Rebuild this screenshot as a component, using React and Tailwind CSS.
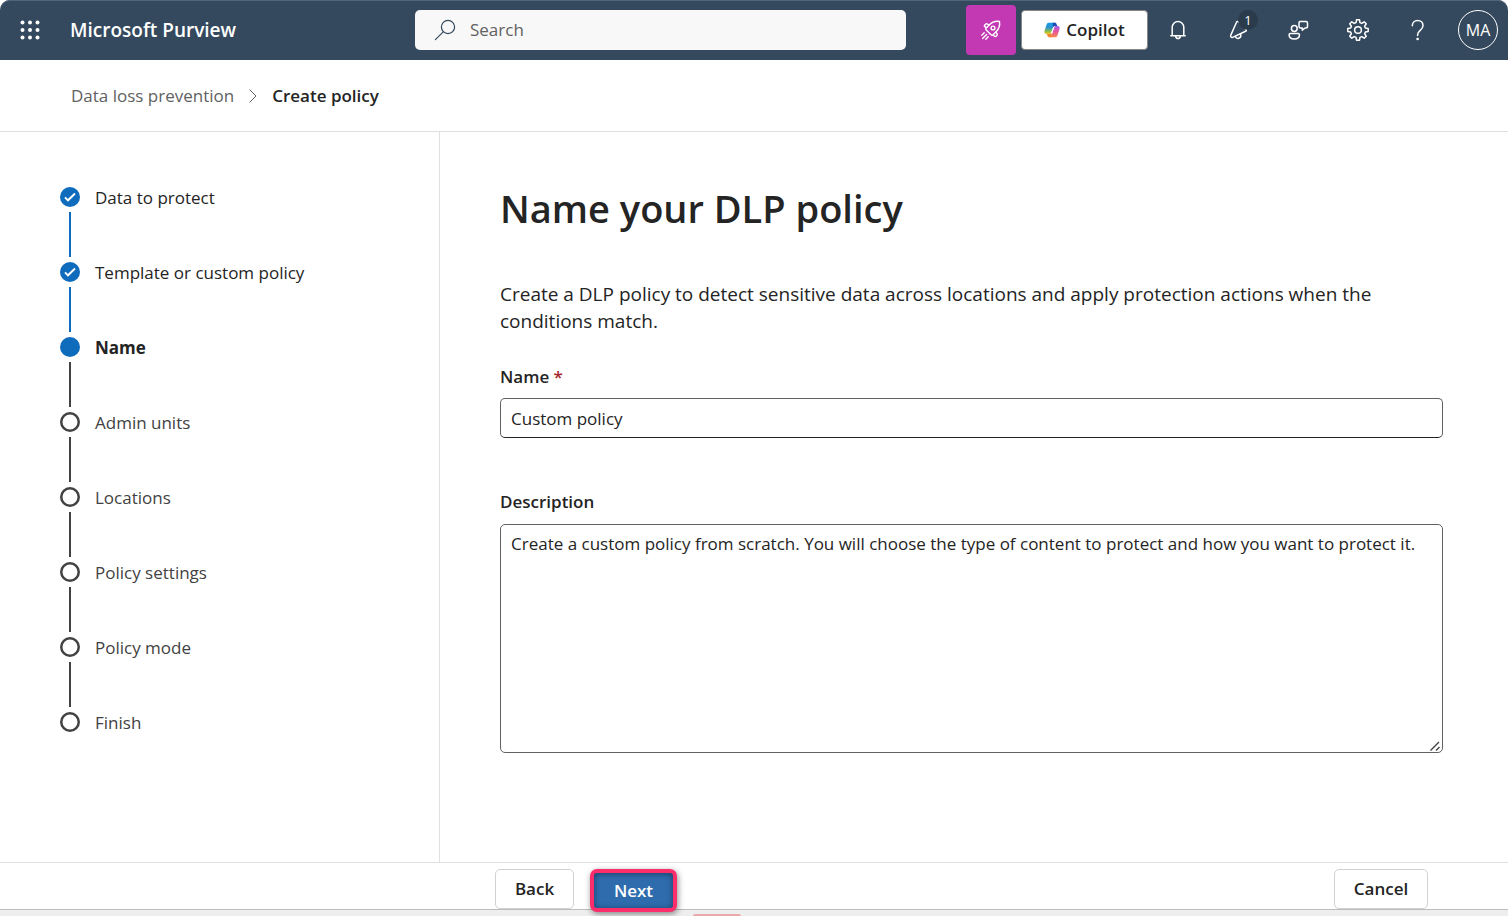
import { useState } from "react";

const steps = [
  { label: "Data to protect", state: "done" },
  { label: "Template or custom policy", state: "done" },
  { label: "Name", state: "current" },
  { label: "Admin units", state: "todo" },
  { label: "Locations", state: "todo" },
  { label: "Policy settings", state: "todo" },
  { label: "Policy mode", state: "todo" },
  { label: "Finish", state: "todo" },
];

const strokeProps = {
  viewBox: "0 0 24 24",
  fill: "none",
  stroke: "currentColor",
  strokeLinecap: "round",
  strokeLinejoin: "round",
  "aria-hidden": true,
};

function WaffleIcon() {
  return (
    <svg viewBox="0 0 20 20" className="size-5" fill="currentColor" aria-hidden="true">
      {[2.5, 10, 17.5].map((y) => [2.5, 10, 17.5].map((x) => <circle key={`${x}-${y}`} cx={x} cy={y} r="2" />))}
    </svg>
  );
}

function SearchIcon() {
  return (
    <svg {...strokeProps} className="size-6 shrink-0 text-[#33495d]" strokeWidth="1.2">
      <circle cx="15" cy="9" r="6.6" />
      <path d="M10.2 13.8 2.4 21.6" />
    </svg>
  );
}

function RocketIcon() {
  return (
    <svg {...strokeProps} className="size-6" strokeWidth="1.4">
      <path d="M20.5 3.5c.6 3.700-.6 7.500-3.400 10.300l-3 3a1.500 1.500 0 0 1-2.100 0l-4.800-4.800a1.500 1.500 0 0 1 0-2.100l3-3c2.800-2.800 6.600-4 10.300-3.400Z" />
      <circle cx="14" cy="10" r="1.900" />
      <path d="M10 7 8 5.800a1 1 0 0 0-1.200.2L5.600 7.200a1 1 0 0 0 .2 1.500l1.300.9M17 14l1.200 2a1 1 0 0 1-.2 1.200l-1.200 1.200a1 1 0 0 1-1.500-.2l-.9-1.300" />
      <path d="m5.200 14.800-2.400 2.400M7.600 16.400l-4 4M9.200 18.800l-2.400 2.400" />
    </svg>
  );
}

function BellIcon() {
  return (
    <svg {...strokeProps} className="size-6" strokeWidth="1.5">
      <path d="M6.200 17.500V9.300a5.800 5.800 0 0 1 11.600 0v8.200M4.800 17.800h14.400M9.500 18c.3 1.600 1.200 2.500 2.500 2.500s2.200-.9 2.500-2.500" />
    </svg>
  );
}

function MegaphoneIcon() {
  return (
    <svg {...strokeProps} className="size-6" strokeWidth="1.5">
      <path d="M10.500 4.200 4.700 17.400c-.5 1.300.7 2.500 2 2L19.600 13.300c.8-.4 1-1.200.4-1.900L12.300 3.800c-.6-.6-1.500-.4-1.800.4Z" />
      <path d="M9.400 18.400c.4 1.600 1.800 2.400 3.300 1.900 1.600-.5 2.500-2 2-3.900" />
    </svg>
  );
}

function FeedbackIcon() {
  return (
    <svg {...strokeProps} className="size-6" strokeWidth="1.5">
      <circle cx="8.300" cy="10.500" r="2.900" />
      <path d="M4.300 15.600h8a1.200 1.200 0 0 1 1.200 1.200c0 2.600-2.100 4.200-5.200 4.200s-5.200-1.600-5.200-4.200a1.200 1.200 0 0 1 1.200-1.200Z" />
      <path d="M14 3.500h6a1.500 1.500 0 0 1 1.500 1.500v3.500A1.500 1.500 0 0 1 20 10h-1l-2.700 2.200V10H14.500a1.500 1.500 0 0 1-1.500-1.500V5a1.500 1.500 0 0 1 1-1.500Z" />
    </svg>
  );
}

function GearIcon() {
  return (
    <svg {...strokeProps} className="size-[26px]" strokeWidth="1.4">
      <path d="M10.200 5.200 10.600 2.600h2.800l.4 2.600 1.700.7 2.200-1.500 1.900 1.900-1.500 2.200.7 1.700 2.600.4v2.800l-2.600.4-.7 1.700 1.500 2.200-1.900 1.900-2.200-1.500-1.700.7-.4 2.600h-2.800l-.4-2.600-1.700-.7-2.200 1.500-1.900-1.900 1.500-2.200-.7-1.700-2.600-.4v-2.800l2.600-.4.7-1.700-1.500-2.200 1.900-1.900 2.200 1.500Z" />
      <circle cx="12" cy="12" r="3.100" />
    </svg>
  );
}

function HelpIcon() {
  return (
    <svg {...strokeProps} className="size-6" strokeWidth="1.500">
      <path d="M6.300 7.800c0-3 2.200-5.300 5.300-5.300s5.400 2.100 5.400 5c0 2.300-1.200 3.500-2.800 4.900-1.700 1.500-2.600 2.400-2.600 4.400v.7" />
      <circle cx="11.600" cy="21" r=".6" fill="currentColor" />
    </svg>
  );
}

function CopilotIcon() {
  return (
    <svg viewBox="0 0 16 16" className="size-4" aria-hidden="true">
      <defs>
        <linearGradient id="cpLeft" x1="0" y1="0" x2="0" y2="1">
          <stop offset="0" stopColor="#159fe6" />
          <stop offset=".4" stopColor="#2b8fd6" />
          <stop offset=".7" stopColor="#74b95a" />
          <stop offset="1" stopColor="#f2c81e" />
        </linearGradient>
        <linearGradient id="cpRight" x1="0" y1="0" x2="0" y2="1">
          <stop offset="0" stopColor="#a15cec" />
          <stop offset=".5" stopColor="#e8559e" />
          <stop offset="1" stopColor="#f5894c" />
        </linearGradient>
      </defs>
      <path d="M7.500 15.200H5.300c-1.100 0-1.600-.6-1.900-1.600L2.800 11.500H8Z" fill="#f2852f" />
      <path d="M5 .8h6L7.300 10.300C6.900 11.400 6.300 12 5 12H2.200C.6 12 0 10.500.5 9l2-6.200C3 1.400 3.700.8 5 .8Z" fill="url(#cpLeft)" />
      <path d="M11 15.200H5.500c1.200 0 1.600-.6 2-1.700L10 5.700C10.400 4.600 11 4 12.200 4h1.600c1.600 0 2.200 1.500 1.700 3l-2 6.200c-.5 1.400-1.200 2-2.500 2Z" fill="url(#cpRight)" />
      <path d="M8.500.8h2.300c1.100 0 1.600.6 1.900 1.600l.6 1.700h-2.100c-1 0-1.600.3-2 1.200Z" fill="#1b4db5" />
      <path d="M9.300 5h1L8.200 11.300H6.900Z" fill="#fff" />
    </svg>
  );
}

function StepMark({ state }) {
  if (state === "done") {
    return (
      <svg viewBox="0 0 20 20" className="size-5 shrink-0" aria-hidden="true">
        <circle cx="10" cy="10" r="10" fill="#0f6cbd" />
        <path d="m5 10.300 3 3 7-6.800" fill="none" stroke="#fff" strokeWidth="1.900" />
      </svg>
    );
  }
  if (state === "current") return <span className="size-5 shrink-0 rounded-full bg-[#0f6cbd]" />;
  return (
    <svg viewBox="0 0 20 20" className="size-5 shrink-0" aria-hidden="true">
      <circle cx="10" cy="10" r="8.750" fill="none" stroke="#424242" strokeWidth="2.500" />
    </svg>
  );
}

function HeaderButton({ label, children }) {
  return (
    <button type="button" aria-label={label} className="relative flex h-[60px] w-[60px] shrink-0 items-center justify-center">
      {children}
    </button>
  );
}

export default function App() {
  const [name, setName] = useState("Custom policy");
  const [description, setDescription] = useState(
    "Create a custom policy from scratch. You will choose the type of content to protect and how you want to protect it."
  );

  return (
    <div className="flex min-h-screen flex-col bg-white font-['Open_Sans','Noto_Sans',sans-serif] text-[17px] leading-6 text-[#242424]">
      <header className="flex h-[60px] items-center rounded-t-[10px] bg-[#34495e] text-white shadow-[inset_0_1px_0_#50647a]">
        <div className="flex w-[415px] shrink-0 items-center">
          <button type="button" aria-label="App launcher" className="flex h-[60px] w-[59px] items-center justify-center">
            <WaffleIcon />
          </button>
          <a href="#home" className="ml-[11px] text-[19px] font-semibold">Microsoft Purview</a>
        </div>
        <label className="flex h-10 max-w-[491px] flex-1 items-center gap-[13px] rounded-[5px] bg-[#f8f8f8] pl-[18px]">
          <SearchIcon />
          <input type="search" aria-label="Search" placeholder="Search" className="min-w-0 flex-1 bg-transparent text-[#242424] outline-none placeholder:text-[#616161]" />
        </label>
        <div className="ml-auto flex items-center">
          <button type="button" aria-label="What's new" className="flex size-[50px] items-center justify-center rounded bg-[#c239b3]">
            <RocketIcon />
          </button>
          <button type="button" className="ml-[5px] flex h-10 w-[127px] items-center justify-center gap-[6px] rounded border border-[#8a8886] bg-white font-semibold text-[#242424]">
            <CopilotIcon />
            Copilot
          </button>
          <HeaderButton label="Notifications"><BellIcon /></HeaderButton>
          <HeaderButton label="Announcements">
            <MegaphoneIcon />
            <span className="absolute top-[10px] left-[30px] flex size-5 items-center justify-center rounded-full bg-[#2a3b4c] text-[13px] leading-none">1</span>
          </HeaderButton>
          <HeaderButton label="Feedback"><FeedbackIcon /></HeaderButton>
          <HeaderButton label="Settings"><GearIcon /></HeaderButton>
          <HeaderButton label="Help"><HelpIcon /></HeaderButton>
          <HeaderButton label="Account">
            <span className="flex size-10 items-center justify-center rounded-full border border-white text-[16px]">MA</span>
          </HeaderButton>
        </div>
      </header>

      <nav aria-label="Breadcrumb" className="flex h-[72px] items-center border-b border-[#e0e0e0] px-[71px] pt-px">
        <a href="#dlp" className="text-[#616161]">Data loss prevention</a>
        <svg viewBox="0 0 10 16" className="mx-[14px] h-4 w-[10px]" fill="none" stroke="#616161" aria-hidden="true">
          <path d="M1.500 1.500 8 8l-6.500 6.500" />
        </svg>
        <span aria-current="page" className="font-semibold">Create policy</span>
      </nav>

      <div className="flex flex-1">
        <aside className="w-[440px] shrink-0 border-r border-[#e0e0e0] pt-[55px] pl-[60px]">
          <ol>
            {steps.map((step, i) => (
              <li key={step.label} className="flex gap-[15px]" aria-current={step.state === "current" ? "step" : undefined}>
                <div className="flex flex-col items-center gap-[5px]">
                  <StepMark state={step.state} />
                  {i < steps.length - 1 && (
                    <span className={`mb-[5px] h-[45px] w-[2px] ${step.state === "done" ? "bg-[#0f6cbd]" : "bg-[#424242]"}`} />
                  )}
                </div>
                <span className={`leading-[21px] ${step.state === "current" ? "font-bold" : step.state === "todo" ? "text-[#424242]" : ""}`}>
                  {step.label}
                </span>
              </li>
            ))}
          </ol>
        </aside>

        <main className="min-w-0 flex-1 pt-[50px] pr-[65px] pl-[60px]">
          <h1 className="text-[38px] leading-[52px] font-semibold">Name your DLP policy</h1>
          <p className="mt-[47px] text-[19px] leading-[27px]">
            Create a DLP policy to detect sensitive data across locations and apply protection actions when the conditions match.
          </p>
          <label htmlFor="policy-name" className="mt-[30px] block font-semibold">
            Name <span className="text-[#a4262c]">*</span>
          </label>
          <input
            id="policy-name"
            value={name}
            onChange={(e) => setName(e.target.value)}
            className="mt-[9px] block h-10 w-full rounded-[5px] border border-[#616161] border-b-[#242424] px-[10px]"
          />
          <label htmlFor="policy-description" className="mt-[52px] block font-semibold">Description</label>
          <div className="relative mt-[10px]">
            <textarea
              id="policy-description"
              value={description}
              onChange={(e) => setDescription(e.target.value)}
              className="block h-[229px] w-full resize-none rounded-[5px] border border-[#616161] px-[10px] py-[7px]"
            />
            <svg viewBox="0 0 12 12" className="pointer-events-none absolute right-[2px] bottom-[1px] size-3" fill="none" stroke="#424242" strokeWidth="1.400" aria-hidden="true">
              <path d="m1.500 10.500 8.500-8.500M7 10.500l3.500-3.500" />
            </svg>
          </div>
        </main>
      </div>

      <footer className="flex items-start border-t border-[#e0e0e0] pt-[6px] pr-20 pl-[495px] font-semibold">
        <button type="button" className="h-10 w-[79px] rounded-[5px] border border-[#d1d1d1] bg-white">Back</button>
        <div className="relative z-10 -mb-[3px] ml-4 h-[43px] w-[87px] rounded-[7px] bg-[#fb2d6b] p-1 shadow-[1px_2px_6px_rgba(0,0,0,0.45)]">
          <button type="button" className="block h-[35px] w-full rounded-[3px] bg-[#2f6cae] text-white shadow-[inset_0_1px_6px_rgba(0,0,0,0.45)]">Next</button>
        </div>
        <button type="button" className="ml-auto h-10 w-[94px] rounded-[5px] border border-[#d1d1d1] bg-white">Cancel</button>
      </footer>
      <div className="flex h-[7px] items-end border-t border-[#bcbcbc] bg-[#eeeeee] pl-[693px]">
        <span className="h-[2px] w-12 rounded-t bg-[#eca9a9]" />
      </div>
    </div>
  );
}
